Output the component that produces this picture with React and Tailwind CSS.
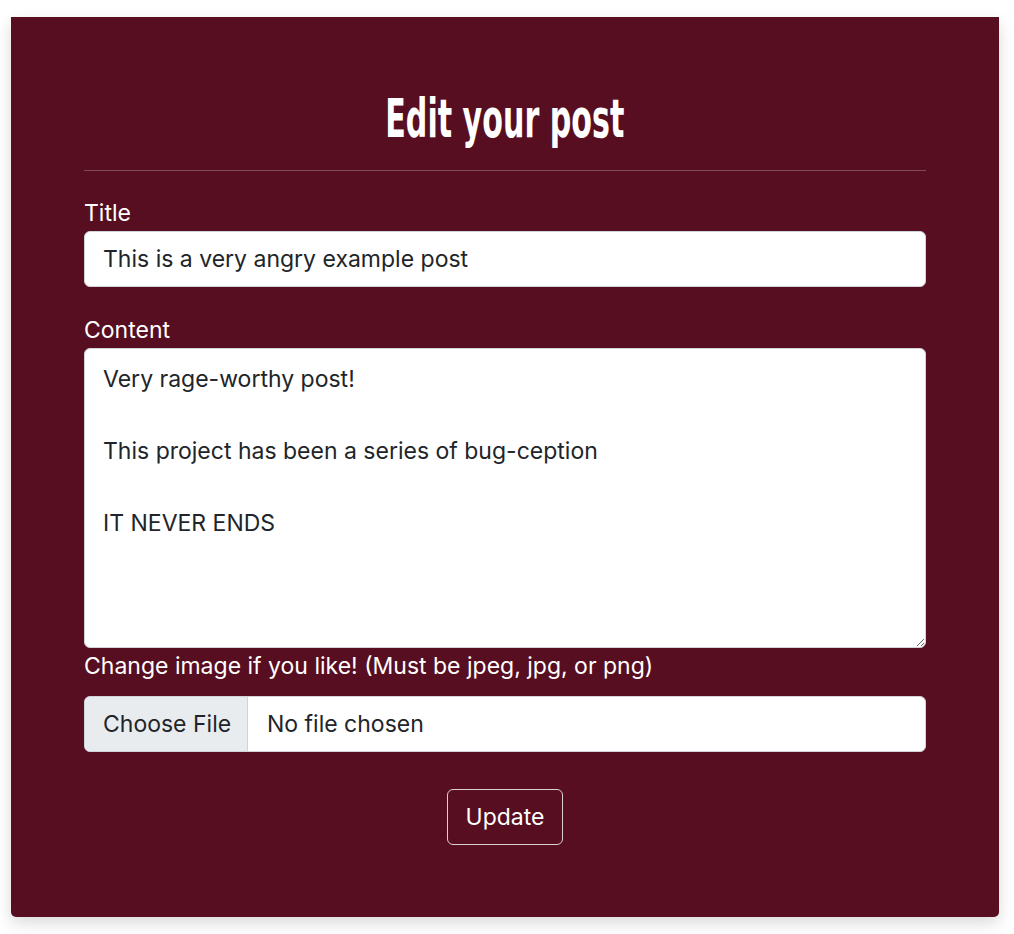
import React from "react";

export default function App() {
  const font = { fontFamily: "Inter, 'Liberation Sans', sans-serif" };
  return (
    <div className="min-h-[934px] bg-white pl-[11px] pr-[15px] pt-[17px] pb-[17px]" style={font}>
      <div className="bg-[#570e21] rounded-b-[5px] shadow-[0_6px_16px_rgba(0,0,0,0.15)] px-[73px] pt-[70px] pb-[72px]">
        <h1 className="h-[64px] flex items-center justify-center text-white">
          <span
            className="inline-block text-[54px] leading-[64px] font-bold scale-x-[0.62] whitespace-nowrap"
            style={{ fontFamily: "'Liberation Sans Narrow', 'DejaVu Sans Condensed', 'Liberation Sans', sans-serif" }}
          >
            Edit your post
          </span>
        </h1>
        <hr className="mt-[19px] mb-[24px] border-0 border-t border-[#814a58]" />

        <label className="block text-white text-[23px] leading-[36px]">Title</label>
        <div className="h-[56px] bg-white border border-[#ced4da] rounded-[6px] px-[18px] flex items-center text-[23px] text-[#212529]">
          This is a very angry example post
        </div>

        <label className="block mt-[25px] text-white text-[23px] leading-[36px]">Content</label>
        <textarea
          className="block w-full h-[300px] bg-white border border-[#ced4da] rounded-[6px] px-[18px] py-[12px] text-[23px] leading-[36px] text-[#212529] outline-none resize-y"
          style={font}
          defaultValue={"Very rage-worthy post!\n\nThis project has been a series of bug-ception\n\nIT NEVER ENDS"}
        />

        <label className="block text-white text-[23px] leading-[36px]">
          Change image if you like! (Must be jpeg, jpg, or png)
        </label>
        <div className="mt-[12px] h-[56px] bg-white border border-[#ced4da] rounded-[6px] flex overflow-hidden text-[23px] text-[#212529]">
          <div className="w-[163px] bg-[#e9ecef] border-r border-[#ced4da] flex items-center pl-[18px]">Choose File</div>
          <div className="flex items-center pl-[19px]">No file chosen</div>
        </div>

        <div className="mt-[37px] flex justify-center">
          <button className="h-[56px] px-[18px] border border-[#dcd0d3] rounded-[6px] text-white text-[23px] bg-transparent">
            Update
          </button>
        </div>
      </div>
    </div>
  );
}
